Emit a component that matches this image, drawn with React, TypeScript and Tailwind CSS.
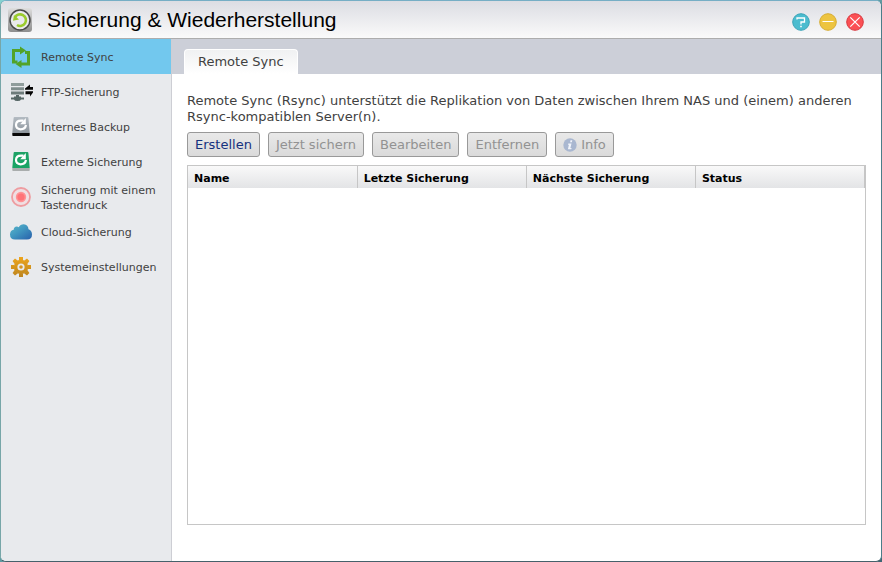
import { useState, type ReactNode } from "react";

const RemoteSyncIcon = () => (
  <svg width="24" height="24" viewBox="0 0 24 24" fill="#52a328">
    <path d="M3 4H11V1.500L17 5.500L11 9.500V7H6V15.500H8.500V18.500H3z" />
    <path d="M21 20.500H12.500V23L6.500 19L12.500 15V17.500H18V9H16V6H21z" />
  </svg>
);

const FtpIcon = () => (
  <svg width="24" height="24" viewBox="0 0 24 24">
    <path d="M2 3H15V6H2z" fill="#8f9c9b" />
    <path d="M2 7.200H15V10.200H2z" fill="#7f8d8c" />
    <path d="M2 11.400H15V14.400H2z" fill="#6d7b7a" />
    <path d="M7 15H10V16.500H12V17.500H15V19.500H12Q11.500 21 8.500 21Q5.500 21 5 19.500H2V17.500H5V16.500H7z" fill="#566665" />
    <path d="M16 8.500L21 4.500V7H24V9.800H16z" fill="#050505" />
    <path d="M24 12.500L21 16.500V14.200H16.500V11.200H24z" fill="#050505" />
  </svg>
);

const DiskIcon = ({ top, bottom, foot, id }: { top: string, bottom: string, foot: string, id: string }) => (
  <svg width="24" height="24" viewBox="0 0 24 24">
    <defs>
      <linearGradient id={id} x1="0" y1="0" x2="0" y2="1">
        <stop offset="0" stopColor={top} />
        <stop offset="1" stopColor={bottom} />
      </linearGradient>
    </defs>
    <path d="M5.500 2H18.500Q19.300 2 19.400 3L20.700 18H3.300L4.600 3Q4.700 2 5.500 2z" fill={`url(#${id})`} />
    <path d="M3.300 18H20.700V20.200Q20.700 21 20 21H4Q3.300 21 3.300 20.200z" fill={foot} />
    <path d="M17 10Q16.200 14.300 11.500 14.300Q7 14 7 9.800Q7.200 5.800 12 5.700H14.500" fill="none" stroke="#fff" strokeWidth="2.200" />
    <path d="M16.800 3V9.200H11.200z" fill="#fff" />
  </svg>
);

const OneTouchIcon = () => (
  <svg width="24" height="24" viewBox="0 0 24 24">
    <circle cx="12" cy="12" r="9" fill="#f0dfe2" stroke="#ee9da1" strokeWidth="1.800" />
    <circle cx="12" cy="12" r="5.200" fill="#ff9294" />
    <circle cx="12" cy="12" r="3.600" fill="#ff7377" />
  </svg>
);

const CloudIcon = () => (
  <svg width="24" height="24" viewBox="0 0 24 24">
    <defs>
      <linearGradient id="cloud" x1="0" y1="0" x2="1" y2="1">
        <stop offset="0" stopColor="#5cb9cb" />
        <stop offset="0.450" stopColor="#4097c0" />
        <stop offset="1" stopColor="#2860ab" />
      </linearGradient>
    </defs>
    <path d="M6 19.500Q1 19.500 1 14.500Q1 10.500 4.700 9.800Q4.700 6.800 7.800 6.500Q9 6.500 9.700 7.200Q11.200 4.200 14.700 4.200Q19.200 4.500 19.500 9.300Q23 10.500 23 14.500Q23 19.500 18 19.500z" fill="url(#cloud)" />
  </svg>
);

const GearIcon = () => (
  <svg width="24" height="24" viewBox="0 0 24 24" stroke="url(#gear)" fill="none">
    <defs>
      <linearGradient id="gear" gradientUnits="userSpaceOnUse" x1="0" y1="2" x2="0" y2="22">
        <stop offset="0" stopColor="#eda51d" />
        <stop offset="1" stopColor="#bd851e" />
      </linearGradient>
    </defs>
    <circle cx="12" cy="12" r="5.400" strokeWidth="3.600" />
    <path d="M10 5.500L10 2H14L14 5.500zM10 18.500L10 22H14L14 18.500zM5.500 10L2 10V14L5.500 14zM18.500 10L22 10V14L18.500 14zM5.700 9L3.600 6L6 3.600L9 5.700zM18.300 9L20.400 6L18 3.600L15 5.700zM5.700 15L3.600 18L6 20.400L9 18.300zM18.300 15L20.400 18L18 20.400L15 18.300z" fill="url(#gear)" stroke="none" />
    <circle cx="12" cy="12" r="1.800" fill="url(#gear)" stroke="none" />
  </svg>
);

const AppIcon = () => (
  <svg width="24" height="24" viewBox="0 0 24 24">
    <defs>
      <linearGradient id="app" x1="0" y1="0" x2="0" y2="1">
        <stop offset="0" stopColor="#dedede" />
        <stop offset="1" stopColor="#8d8d8d" />
      </linearGradient>
    </defs>
    <rect width="24" height="24" rx="3" fill="url(#app)" />
    <circle cx="12" cy="12" r="10" fill="#e9e9ec" stroke="#484848" strokeWidth="1.500" />
    <path d="M9 17A5.800 5.800 0 1 0 7 9.500" fill="none" stroke="#9acb2d" strokeWidth="2.600" />
    <path d="M5 12.800L6 7L11 11.500z" fill="#9acb2d" />
  </svg>
);

const InfoIcon = () => (
  <svg width="14" height="14" viewBox="0 0 14 14">
    <circle cx="7" cy="7" r="6.700" fill="#a9b7d0" />
    <path d="M7.500 2.300H9.300L8.900 4.200H7.100zM5.300 5.400H8.500L7.400 10H8.600L8.300 11.300H4.900L5.900 6.700H5z" fill="#f1f4fa" />
  </svg>
);

const items: { label: string, icon: ReactNode }[] = [
  { label: "Remote Sync", icon: <RemoteSyncIcon /> },
  { label: "FTP-Sicherung", icon: <FtpIcon /> },
  { label: "Internes Backup", icon: <DiskIcon id="internal" top="#b3bbc2" bottom="#8e969d" foot="#080808" /> },
  { label: "Externe Sicherung", icon: <DiskIcon id="external" top="#1ea266" bottom="#18a464" foot="#a9adad" /> },
  { label: "Sicherung mit einem Tastendruck", icon: <OneTouchIcon /> },
  { label: "Cloud-Sicherung", icon: <CloudIcon /> },
  { label: "Systemeinstellungen", icon: <GearIcon /> },
];

const columns = ["Name", "Letzte Sicherung", "Nächste Sicherung", "Status"];

function ToolButton({ children, disabled }: { children: ReactNode, disabled?: boolean }) {
  return (
    <button
      type="button"
      disabled={disabled}
      className="flex h-[25px] items-center gap-1 whitespace-nowrap rounded-[3px] border border-[#999] bg-linear-to-b from-[#e9e9e9] to-[#dadada] px-[7px] text-[13px] leading-4 text-[#15317e] disabled:text-[#929292]"
    >
      {children}
    </button>
  );
}

export default function App() {
  const [active, setActive] = useState("Remote Sync");

  return (
    <div className="min-h-screen bg-linear-to-br from-[#86d2d1] to-[#3d6673] font-['DejaVu_Sans',Verdana,sans-serif]">
      <div className="flex min-h-screen flex-col overflow-hidden rounded-md border border-t-[#76aec5] border-r-[#4b7d89] border-b-[#46616b] border-l-[#77a6a8] bg-white">
        {/* TITLE BAR */}
        <header className="flex h-[38px] shrink-0 items-center border-b border-[#adadad] bg-linear-to-b from-[#dcdde3] to-[#fafafa] pr-[17px] pl-[7px]">
          <AppIcon />
          <h1 className="ml-[15px] flex-1 font-['Liberation_Sans',Arial,sans-serif] text-[21px] leading-6 text-black">Sicherung &amp; Wiederherstellung</h1>
          <div className="flex gap-[9px] pt-1">
            <button type="button" aria-label="Hilfe">
              <svg width="18" height="18" viewBox="0 0 18 18" fill="none">
                <circle cx="9" cy="9" r="8.300" fill="#4bbccf" stroke="#3aa3b7" />
                <path d="M5 6.500V5H12.500V9H9V11.500" stroke="#fff" strokeWidth="1.300" />
                <path d="M8.200 12.800H9.800V14.300H8.200z" fill="#fff" />
              </svg>
            </button>
            <button type="button" aria-label="Minimieren">
              <svg width="18" height="18" viewBox="0 0 18 18">
                <circle cx="9" cy="9" r="8.300" fill="#edc440" stroke="#d6ac31" />
                <path d="M3.500 8.500H14.500" stroke="#fff" />
              </svg>
            </button>
            <button type="button" aria-label="Schließen">
              <svg width="18" height="18" viewBox="0 0 18 18">
                <circle cx="9" cy="9" r="8.300" fill="#fb5054" stroke="#d83a40" />
                <path d="M4.300 4.300L13.700 13.700M13.700 4.300L4.300 13.700" stroke="#fff" strokeWidth="1.200" />
              </svg>
            </button>
          </div>
        </header>

        <div className="flex flex-1">
          {/* SIDEBAR */}
          <nav className="w-[171px] shrink-0 border-r border-[#cdced4] bg-[#e8eaed]">
            {items.map((item) => (
              <button
                key={item.label}
                type="button"
                onClick={() => setActive(item.label)}
                className={`flex h-[35px] w-full items-center gap-2 pl-2 text-left text-[11px] leading-[15px] text-[#414141] ${active === item.label ? "bg-[#72c8ee]" : ""}`}
              >
                <span className="shrink-0">{item.icon}</span>
                <span className="pt-0.5">{item.label}</span>
              </button>
            ))}
          </nav>

          <main className="flex min-w-0 flex-1 flex-col">
            {/* TABS */}
            <div role="tablist" className="flex h-[35px] items-end bg-[#cccfd8] px-3">
              <button type="button" role="tab" aria-selected="true" className="h-[25px] rounded-t border border-b-0 border-white bg-linear-to-b from-[#f0f1f2] to-white px-[13px] text-[13px] leading-4 text-[#414141]">
                Remote Sync
              </button>
            </div>

            <div className="flex flex-1 flex-col pt-[19px] pr-[15px] pb-9 pl-[15px]">
              <p className="text-[13px] leading-4 text-[#414141]">
                Remote Sync (Rsync) unterstützt die Replikation von Daten zwischen Ihrem NAS und (einem) anderen Rsync-kompatiblen Server(n).
              </p>

              <div className="mt-[7px] flex gap-2">
                <ToolButton>Erstellen</ToolButton>
                <ToolButton disabled>Jetzt sichern</ToolButton>
                <ToolButton disabled>Bearbeiten</ToolButton>
                <ToolButton disabled>Entfernen</ToolButton>
                <ToolButton disabled>
                  <InfoIcon />
                  <span>Info</span>
                </ToolButton>
              </div>

              {/* JOB LIST */}
              <div className="mt-2 flex-1 border border-[#c6c6c6]">
                <table className="w-full table-fixed border-collapse text-[11px] leading-4 text-black">
                  <thead>
                    <tr className="h-[22px] bg-linear-to-b from-[#f9f9f9] to-[#e3e4e6]">
                      {columns.map((col) => (
                        <th key={col} scope="col" className="border-r border-[#c6c6c6] px-1.5 pt-1 text-left font-bold">{col}</th>
                      ))}
                    </tr>
                  </thead>
                  <tbody />
                </table>
              </div>
            </div>
          </main>
        </div>
      </div>
    </div>
  );
}
